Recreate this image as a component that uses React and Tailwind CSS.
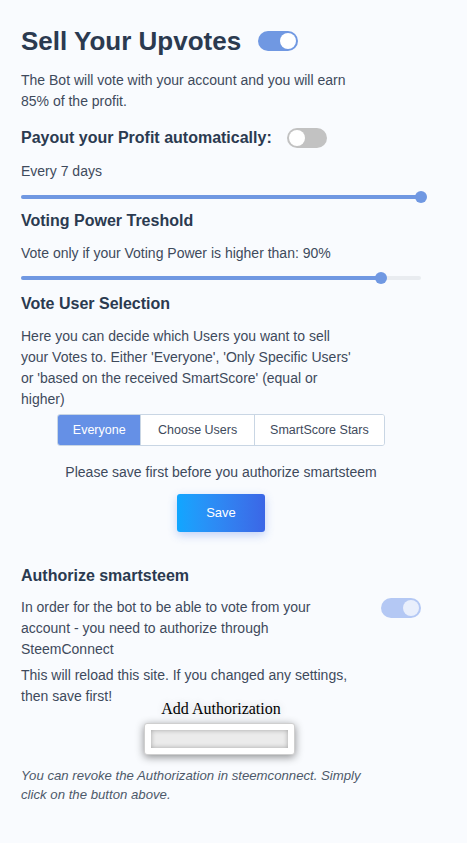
import { useState } from 'react'

function Toggle({ on, faded, className = '' }) {
  const track = on ? (faded ? 'bg-[#b4c8f4]' : 'bg-[#7098e2]') : 'bg-[#c2c2c2]'
  const knob = faded ? 'bg-[#e9effc]' : 'bg-white'
  return (
    <div className={`relative w-[40px] h-[20px] rounded-full shrink-0 ${track} ${className}`}>
      <div
        className={`absolute top-[2px] w-[16px] h-[16px] rounded-full ${knob} ${on ? 'left-[22px]' : 'left-[2px]'}`}
      />
    </div>
  )
}

function Slider({ value }) {
  return (
    <div className="relative h-[12px] flex items-center">
      <div className="w-full h-[4px] rounded-full bg-[#e9ecf0]">
        <div className="h-full rounded-full bg-[#7098e2]" style={{ width: `${value}%` }} />
      </div>
      <div
        className="absolute w-[12px] h-[12px] rounded-full bg-[#7098e2] -translate-x-1/2"
        style={{ left: `${value}%` }}
      />
    </div>
  )
}

export default function App() {
  const [mode, setMode] = useState('everyone')
  const modes = [
    { key: 'everyone', label: 'Everyone', w: 'w-[83px]' },
    { key: 'choose', label: 'Choose Users', w: 'w-[114px]' },
    { key: 'stars', label: 'SmartScore Stars', w: 'w-[131px]' },
  ]

  return (
    <div className="min-h-screen bg-[#f9fbfe] font-['Liberation_Sans',Arial,sans-serif] text-[#3e4a5c]">
      <div className="w-[400px] ml-[21px] pt-[26px] pb-10">

        {/* Sell upvotes */}
        <div className="flex items-center gap-[17px] h-[30px]">
          <h1 className="text-[26px] leading-[30px] font-bold text-[#2b3a50]">Sell Your Upvotes</h1>
          <Toggle on />
        </div>
        <p className="mt-[14px] text-[14px] leading-[21px] max-w-[338px]">
          The Bot will vote with your account and you will earn 85% of the profit.
        </p>

        {/* Payout */}
        <div className="mt-[16px] flex items-center gap-[15px] h-[20px]">
          <h2 className="text-[16px] leading-[20px] font-bold text-[#2b3a50]">Payout your Profit automatically:</h2>
          <Toggle on={false} />
        </div>
        <p className="mt-[13px] text-[14px] leading-[21px]">Every 7 days</p>
        <div className="mt-[9px]">
          <Slider value={100} />
        </div>

        {/* Voting power */}
        <h2 className="mt-[8px] text-[16px] leading-[20px] font-bold text-[#2b3a50]">Voting Power Treshold</h2>
        <p className="mt-[12px] text-[14px] leading-[21px]">Vote only if your Voting Power is higher than: 90%</p>
        <div className="mt-[8px]">
          <Slider value={90} />
        </div>

        {/* Vote user selection */}
        <h2 className="mt-[10px] text-[16px] leading-[20px] font-bold text-[#2b3a50]">Vote User Selection</h2>
        <p className="mt-[12px] text-[14px] leading-[21px] max-w-[338px]">
          Here you can decide which Users you want to sell your Votes to. Either 'Everyone', 'Only Specific Users' or 'based on the received SmartScore' (equal or higher)
        </p>
        <div className="mt-[4px] ml-[36px] flex h-[32px] w-[328px] rounded-[3px] border border-[#c9d6e4] overflow-hidden bg-white">
          {modes.map((m, i) => (
            <button
              key={m.key}
              onClick={() => setMode(m.key)}
              className={`${m.w} h-full text-[12.5px] ${i > 0 ? 'border-l border-[#c9d6e4]' : ''} ${
                mode === m.key ? 'bg-[#6590e6] text-white' : 'bg-white text-[#3e4a5c]'
              }`}
            >
              {m.label}
            </button>
          ))}
        </div>

        <p className="mt-[16px] text-[14px] leading-[21px] text-center">Please save first before you authorize smartsteem</p>
        <div className="mt-[11px] flex justify-center">
          <button className="w-[88px] h-[38px] rounded-[3px] bg-gradient-to-r from-[#0fa6ff] to-[#3b66e6] text-white text-[13px] shadow-[0_3px_10px_rgba(60,110,230,0.3)]">
            Save
          </button>
        </div>

        {/* Authorize */}
        <h2 className="mt-[34px] text-[16px] leading-[20px] font-bold text-[#2b3a50]">Authorize smartsteem</h2>
        <div className="mt-[11px] flex justify-between items-start">
          <p className="text-[14px] leading-[21px] max-w-[338px]">
            In order for the bot to be able to vote from your account - you need to authorize through SteemConnect
          </p>
          <Toggle on faded className="mt-[1px]" />
        </div>
        <p className="mt-[5px] text-[14px] leading-[21px] max-w-[338px]">
          This will reload this site. If you changed any settings, then save first!
        </p>

        <div className="-mt-[7px] flex flex-col items-center">
          <span className="font-['Liberation_Serif','Times_New_Roman',serif] text-[16px] leading-[18px] text-black [text-shadow:0_0_8px_rgba(0,0,0,0.2)]">
            Add Authorization
          </span>
          <div className="mt-[5px] -ml-[3px] w-[151px] h-[32px] rounded-[3px] border border-[#cfcfcf] bg-white p-[6px] shadow-[0_2px_8px_rgba(0,0,0,0.45)]">
            <div className="w-full h-full bg-[#ebebeb] shadow-[inset_0_0_5px_rgba(0,0,0,0.3)]" />
          </div>
        </div>

        <p className="mt-[11px] text-[13.2px] leading-[19px] italic text-[#4d596a] max-w-[360px]">
          You can revoke the Authorization in steemconnect. Simply click on the button above.
        </p>
      </div>
    </div>
  )
}
